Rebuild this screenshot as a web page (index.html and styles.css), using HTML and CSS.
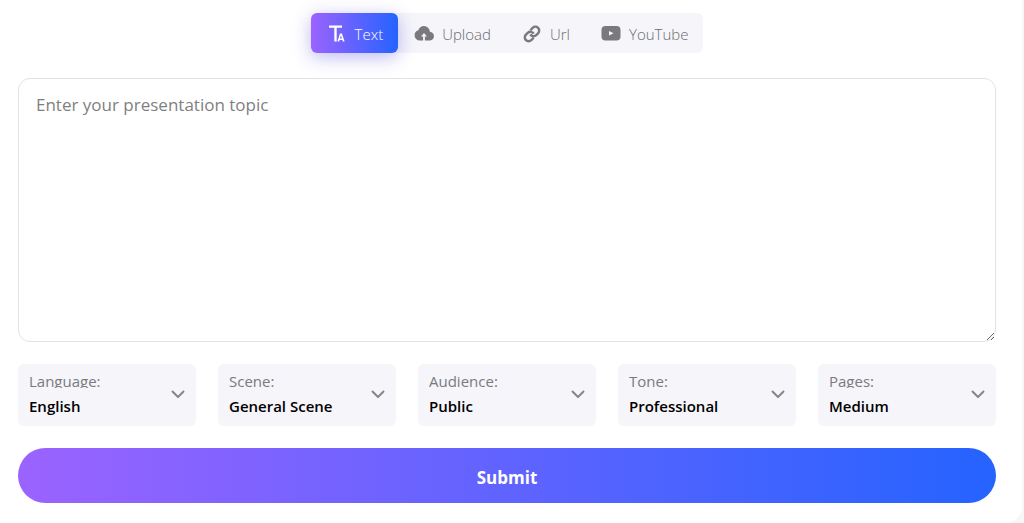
FILE: index.html
```
<!DOCTYPE html>
<html lang="en">
<head>
    <meta charset="UTF-8">
    <meta name="viewport" content="width=device-width, initial-scale=1.0">
    <title>Presentation</title>
    <link rel="stylesheet" href="styles.css">
</head>
<body>
    <form class="panel">
        <div class="tabs">
            <button type="button" class="tab on">
                <svg class="icon" viewBox="0 0 20 20"><path d="M2 1.500h13v2.200H9.700v13.800H7.300V3.700H2z"/><path fill-rule="evenodd" d="M13 9.500h1.900l2.700 8h-1.700l-.5-1.600h-2.800l-.5 1.600h-1.700zM13.900 11.500l-.9 2.900h1.900z"/></svg>
                Text
            </button>
            <button type="button" class="tab">
                <svg class="icon" viewBox="0 0 20 20"><path d="M15.900 7.800A6.200 6.200 0 0 0 10 2a6.200 6.200 0 0 0-5.700 4.300A5.200 5.200 0 0 0 .6 11.400a5.200 5.200 0 0 0 5.200 5.200h3.300v-4H7L10 9l3 3.600h-2.100v4h4.300a4.400 4.400 0 0 0 .7-8.800z"/></svg>
                Upload
            </button>
            <button type="button" class="tab">
                <svg class="icon line" viewBox="0 0 20 20"><g transform="rotate(-45 10 10)"><path d="M8.500 13.800H5.200a3.800 3.800 0 0 1 0-7.600h2.600a3.800 3.800 0 0 1 3.600 4.800M11.500 6.200h3.300a3.800 3.800 0 0 1 0 7.600h-2.600A3.800 3.800 0 0 1 8.600 9"/></g></svg>
                Url
            </button>
            <button type="button" class="tab">
                <svg class="icon" viewBox="0 0 20 20"><path fill-rule="evenodd" d="M4.500 2h11a4 4 0 0 1 4 4v6.500a4 4 0 0 1-4 4h-11a4 4 0 0 1-4-4V6a4 4 0 0 1 4-4zM8 7v4.600l4.600-2.300z"/></svg>
                YouTube
            </button>
        </div>

        <textarea class="topic" aria-label="Presentation topic" placeholder="Enter your presentation topic"></textarea>

        <div class="options">
            <div class="field">
                <label for="language">Language:</label>
                <select id="language"><option>English</option></select>
                <svg class="arrow" viewBox="0 0 14 8"><path d="M1 1l6 6 6-6"/></svg>
            </div>
            <div class="field">
                <label for="scene">Scene:</label>
                <select id="scene"><option>General Scene</option></select>
                <svg class="arrow" viewBox="0 0 14 8"><path d="M1 1l6 6 6-6"/></svg>
            </div>
            <div class="field">
                <label for="audience">Audience:</label>
                <select id="audience"><option>Public</option></select>
                <svg class="arrow" viewBox="0 0 14 8"><path d="M1 1l6 6 6-6"/></svg>
            </div>
            <div class="field">
                <label for="tone">Tone:</label>
                <select id="tone"><option>Professional</option></select>
                <svg class="arrow" viewBox="0 0 14 8"><path d="M1 1l6 6 6-6"/></svg>
            </div>
            <div class="field">
                <label for="pages">Pages:</label>
                <select id="pages"><option>Medium</option></select>
                <svg class="arrow" viewBox="0 0 14 8"><path d="M1 1l6 6 6-6"/></svg>
            </div>
        </div>

        <button type="submit" class="submit">Submit</button>
    </form>
</body>
</html>
```
FILE: styles.css
```
*{
    box-sizing: border-box;
}
body{
    margin: 0;
    padding-right: 2px;
    background-color: #f7f7f7;
    font-family: "Open Sans", "Noto Sans", sans-serif;
}
button, textarea, select{
    font-family: inherit;
}
.panel{
    display: flex;
    flex-direction: column;
    gap: 22px;
    min-height: 100vh;
    padding: 13px 26px 20px 18px;
    background-color: #fff;
    border-radius: 0 0 16px 0;
}

/* tabs */
.tabs{
    display: flex;
    align-self: center;
    margin-bottom: 3px;
    background-color: #f5f5fa;
    border-radius: 6px;
}
.tab{
    display: flex;
    align-items: center;
    gap: 8px;
    height: 40px;
    padding: 2px 15px 0 16px;
    border: 0;
    border-radius: 6px;
    background: none;
    color: #6c6c70;
    font-size: 15px;
    font-weight: 300;
    cursor: pointer;
}
.tab.on{
    background: linear-gradient(90deg, #9b63ff, #2563ff);
    box-shadow: 0 4px 18px rgba(90, 80, 220, 0.4);
    color: #fff;
}
.icon{
    width: 20px;
    height: 20px;
    fill: #7a7a7d;
}
.tab.on .icon{
    fill: #fff;
}
.icon.line{
    fill: none;
    stroke: #7a7a7d;
    stroke-width: 2.4;
}

.topic{
    display: block;
    width: 100%;
    height: 264px;
    padding: 14px 17px;
    border: 1px solid #e3e3e6;
    border-radius: 12px;
    background-color: #fff;
    font-size: 17px;
    line-height: 24px;
    outline: none;
}
.topic::placeholder{
    color: #7f7f7f;
}

/* options */
.options{
    display: grid;
    grid-template-columns: repeat(5, 1fr);
    gap: 22px;
}
.field{
    display: grid;
    align-items: start;
    background-color: #f5f5fa;
    border-radius: 6px;
}
.field > *{
    grid-area: 1 / 1;
}
.field label{
    height: 24px;
    margin-left: 11px;
    overflow: hidden;
    color: #7a7a7d;
    font-size: 15px;
    font-weight: 500;
    line-height: 35px;
    pointer-events: none;
}
.field select{
    width: 100%;
    height: 62px;
    padding: 22px 36px 0 11px;
    border: 0;
    border-radius: 6px;
    background: none;
    appearance: none;
    color: #000;
    font-size: 15px;
    font-weight: 600;
}
.arrow{
    align-self: center;
    justify-self: end;
    width: 14px;
    height: 8px;
    margin: 0 11px 2px 0;
    fill: none;
    stroke: #85858a;
    stroke-width: 2;
    pointer-events: none;
}

.submit{
    height: 55px;
    padding: 3px 0 0;
    border: 0;
    border-radius: 28px;
    background: linear-gradient(90deg, #9b63ff, #2563ff);
    color: #fff;
    font-size: 17px;
    font-weight: 700;
    cursor: pointer;
}
```
